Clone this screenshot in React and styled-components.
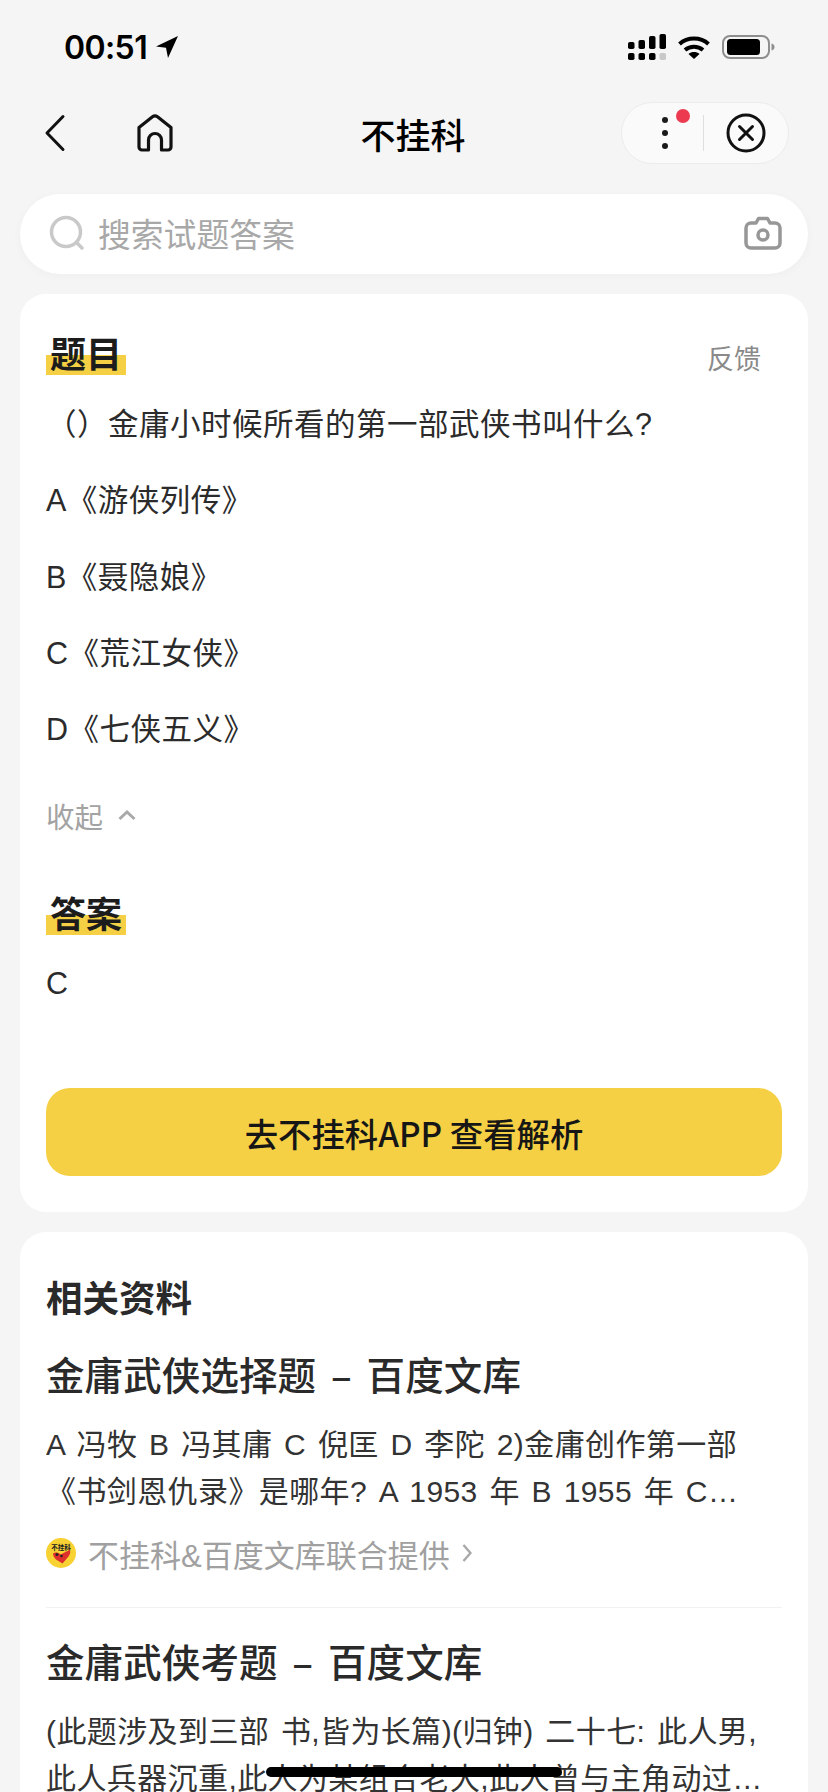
import React from "react"
import styled, { createGlobalStyle } from "styled-components"

const GlobalStyle = createGlobalStyle`
  html, body {
    margin: 0;
    padding: 0;
    background: #f5f5f5;
  }
  * {
    box-sizing: border-box;
  }
`

const Page = styled.div`
  position: relative;
  width: 828px;
  height: 1792px;
  overflow: hidden;
  background: #f5f5f5;
  color: #1c1c1c;
  font-family: "Liberation Sans", "Noto Sans CJK SC", sans-serif;
`

const StatusBar = styled.div`
  height: 94px;
  padding: 26px 53px 0 64px;
  display: flex;
  justify-content: space-between;
  align-items: flex-start;
`

const Clock = styled.div`
  display: flex;
  align-items: center;
  gap: 8px;
  height: 42px;
  font-family: Inter, sans-serif;
  font-size: 32px;
  font-weight: 600;
  letter-spacing: -0.6px;
  color: #000;
`

const StatusIcons = styled.div`
  display: flex;
  align-items: center;
  gap: 12px;
  height: 42px;
`

const NavBar = styled.div`
  height: 78px;
  padding: 0 39px 0 44px;
  display: flex;
  align-items: center;
  position: relative;
`

const NavIcons = styled.div`
  display: flex;
  align-items: center;
  gap: 70px;
  color: #111;
`

const NavTitle = styled.div`
  position: absolute;
  left: 0;
  right: 2px;
  text-align: center;
  font-family: "Noto Sans CJK SC", sans-serif;
  font-size: 35px;
  font-weight: 500;
  color: #000;
  pointer-events: none;
`

const Capsule = styled.div`
  margin-left: auto;
  width: 168px;
  height: 62px;
  border-radius: 31px;
  background: #fafafa;
  border: 1px solid #ececec;
  display: flex;
  align-items: center;
  position: relative;
`

const MenuSide = styled.div`
  width: 81px;
  padding-left: 5px;
  display: flex;
  align-items: center;
  justify-content: center;
`

const CloseSide = styled.div`
  flex: 1;
  display: flex;
  align-items: center;
  justify-content: center;
`

const CapsuleDivider = styled.div`
  width: 1px;
  height: 36px;
  background: #dedede;
`

const RedDot = styled.span`
  position: absolute;
  left: 54px;
  top: 6px;
  width: 14px;
  height: 14px;
  border-radius: 50%;
  background: #ec3b50;
`

const SearchBar = styled.div`
  margin: 22px 20px 0;
  height: 80px;
  border-radius: 40px;
  background: #fff;
  box-shadow: 0 2px 10px rgba(0, 0, 0, 0.03);
  padding: 0 26px 3px 29px;
  display: flex;
  align-items: center;
  gap: 13px;
  font-size: 32.800px;
  color: #a8a8a8;
`

const SearchText = styled.span`
  flex: 1;
`

const Card = styled.section`
  margin: 20px 20px 0;
  padding: 0 26px;
  background: #fff;
  border-radius: 26px;
`

const QuestionCard = styled(Card)`
  height: 918px;
  padding-top: 40px;
`

const RelatedCard = styled(Card)`
  min-height: 700px;
`

const HeadRow = styled.div`
  display: flex;
  justify-content: space-between;
  align-items: center;
`

const Marked = styled.h2`
  margin: ${props => props.$top || 0}px 0 0;
  padding: 0 6px 0 4px;
  width: 80px;
  height: 42px;
  display: block;
  font-size: 36px;
  line-height: 42px;
  font-weight: 700;
  white-space: nowrap;
  color: #1c1c1c;
  background: linear-gradient(#f6d044, #f6d044) left 0 top 20px / 100% 20px no-repeat;
`

const Feedback = styled.span`
  margin: 4px 21px 0 0;
  font-size: 27px;
  color: #8a8a8a;
`

const Line = styled.p`
  margin: ${props => props.$top || 0}px 0 0;
  height: 46px;
  font-size: 30.500px;
  line-height: 46px;
  letter-spacing: 0.5px;
  white-space: nowrap;
  color: #2b2b2b;
`

const Collapse = styled.div`
  margin-top: 43px;
  height: 40px;
  display: flex;
  align-items: center;
  gap: 15px;
  font-size: 28.500px;
  color: #a3a3a3;
`

const ViewButton = styled.div`
  margin-top: 82px;
  height: 88px;
  border-radius: 24px;
  background: #f6d044;
  display: flex;
  align-items: center;
  justify-content: center;
  font-family: "Noto Sans CJK SC", sans-serif;
  font-size: 33.400px;
  font-weight: 500;
  color: #161616;
`

const RelatedTitle = styled.h3`
  margin: 0;
  padding-top: 46px;
  height: 98px;
  font-size: 36.500px;
  line-height: 44px;
  font-weight: 600;
  color: #2a2a2a;
`

const ResultTitle = styled.h4`
  margin: ${props => props.$top}px 0 0;
  font-family: "Noto Sans CJK SC", sans-serif;
  font-size: 38.500px;
  line-height: 50px;
  font-weight: 500;
  letter-spacing: 0.1px;
  word-spacing: 6px;
  white-space: nowrap;
  color: #2a2a2a;
`

const ResultText = styled.p`
  margin: 22.500px 0 0;
  font-size: 30px;
  line-height: 47px;
  letter-spacing: 0.4px;
  word-spacing: 3px;
  color: #333;
  display: -webkit-box;
  -webkit-line-clamp: 2;
  -webkit-box-orient: vertical;
  overflow: hidden;
`

const Source = styled.div`
  margin-top: 17.500px;
  height: 42px;
  display: flex;
  align-items: center;
  gap: 12px;
  font-size: 31px;
  color: #a0a0a0;
`

const Rule = styled.hr`
  margin: 33px 0 0;
  border: 0;
  border-top: 1px solid #f1f1f1;
`

const HomeBar = styled.div`
  position: absolute;
  left: 266px;
  top: 1767px;
  width: 296px;
  height: 10px;
  border-radius: 5px;
  background: #000;
`

const LocationArrow = () => (
  <svg width="24" height="24" viewBox="0 0 24 24">
    <path d="M23 1 1 11.500l10 1.300L13 23z" fill="#000" />
  </svg>
)

const signalBars = [
  { x: 0, y: 8, h: 7 },
  { x: 10.500, y: 6, h: 9 },
  { x: 21, y: 2, h: 13 },
  { x: 31.500, y: 0, h: 15 },
]

const Signal = () => (
  <svg width="38" height="26" viewBox="0 0 38 26">
    {signalBars.map((bar, i) => (
      <g key={bar.x}>
        <rect x={bar.x} y={bar.y} width="6.500" height={bar.h} rx="1.800" fill="#000" />
        <rect x={bar.x} y="19" width="6.500" height="7" rx="1.800" fill={i === 3 ? "#c8c8c8" : "#000"} />
      </g>
    ))}
  </svg>
)

const Wifi = () => (
  <svg width="32" height="23" viewBox="0 0 32 23">
    <g fill="none" stroke="#000" strokeWidth="4">
      <path d="M1.500 8C9.500.8 22.500.8 30.500 8" />
      <path d="M7 14c5.200-4.400 12.800-4.400 18 0" />
    </g>
    <path d="M10.500 18c3.200-2.600 7.800-2.600 11 0L16 23z" fill="#000" />
  </svg>
)

const Battery = () => (
  <svg width="53" height="24" viewBox="0 0 53 24">
    <rect x="1" y="1" width="46" height="22" rx="7" fill="none" stroke="#8e8e8e" strokeWidth="2" />
    <rect x="5" y="4" width="33" height="16" rx="3.500" fill="#000" />
    <path d="M49.500 8.500c2 .5 3 1.800 3 3.500s-1 3-3 3.500z" fill="#8e8e8e" />
  </svg>
)

const Back = () => (
  <svg width="22" height="38" viewBox="0 0 22 38">
    <path d="M19 2.500 3 19l16 16.500" fill="none" stroke="#111" strokeWidth="3" strokeLinecap="round" strokeLinejoin="round" />
  </svg>
)

const Home = () => (
  <svg width="38" height="38" viewBox="0 0 38 38">
    <path
      d="M3 13.500 16.500 2.800a4 4 0 0 1 5 0L35 13.500V33a3 3 0 0 1-3 3h-6.500V26a6.500 6.500 0 0 0-13 0v10H6a3 3 0 0 1-3-3z"
      fill="none"
      stroke="#111"
      strokeWidth="3.200"
      strokeLinejoin="round"
    />
  </svg>
)

const Dots = () => (
  <svg width="8" height="34" viewBox="0 0 8 34">
    <g fill="#1a1a1a">
      <circle cx="4" cy="4" r="3" />
      <circle cx="4" cy="17" r="3" />
      <circle cx="4" cy="30" r="3" />
    </g>
  </svg>
)

const CloseCircle = () => (
  <svg width="40" height="40" viewBox="0 0 40 40">
    <circle cx="20" cy="20" r="18" fill="none" stroke="#111" strokeWidth="3" />
    <path d="M13.500 13.500l13 13m0-13-13 13" fill="none" stroke="#111" strokeWidth="3" strokeLinecap="round" />
  </svg>
)

const SearchIcon = () => (
  <svg width="36" height="36" viewBox="0 0 36 36">
    <circle cx="17" cy="17" r="14.500" fill="none" stroke="#c9c9c9" strokeWidth="3.500" />
    <path d="M28 28l5 5" fill="none" stroke="#c9c9c9" strokeWidth="3.500" strokeLinecap="round" />
  </svg>
)

const Camera = () => (
  <svg width="38" height="34" viewBox="0 0 38 34">
    <path
      d="M7 7h5l2.500-4.500h9L26 7h5a5 5 0 0 1 5 5v15a5 5 0 0 1-5 5H7a5 5 0 0 1-5-5V12a5 5 0 0 1 5-5z"
      fill="none"
      stroke="#979797"
      strokeWidth="3.500"
      strokeLinejoin="round"
    />
    <circle cx="19" cy="19" r="5" fill="none" stroke="#979797" strokeWidth="3.500" />
  </svg>
)

const ChevronUp = () => (
  <svg width="18" height="12" viewBox="0 0 18 12">
    <path d="M1.500 10 9 3l7.500 7" fill="none" stroke="#a9a9a9" strokeWidth="3" />
  </svg>
)

const ChevronRight = () => (
  <svg width="10" height="20" viewBox="0 0 10 20">
    <path d="M1.500 2 8.500 10l-7 8" fill="none" stroke="#a8a8a8" strokeWidth="2.400" />
  </svg>
)

const Logo = () => (
  <svg width="30" height="30" viewBox="0 0 30 30">
    <circle cx="15" cy="15" r="15" fill="#f8d132" />
    <text x="15" y="11.500" textAnchor="middle" fontSize="6.500" fontWeight="700" fill="#222" fontFamily="Noto Sans CJK SC">不挂科</text>
    <path d="M7 15.500c2-1.500 5-1.500 7.500 1l9-4.500c1.500 1.500 .5 4-1 6.500l-6 7-6.500-4c-2-2-3-4-3-6z" fill="#dd2f2c" />
    <circle cx="11" cy="16.500" r="1.500" fill="#222" />
    <circle cx="15.500" cy="18" r="1.300" fill="#222" />
  </svg>
)

const options = ["A《游侠列传》", "B《聂隐娘》", "C《荒江女侠》", "D《七侠五义》"]

const results = [
  {
    title: "金庸武侠选择题 – 百度文库",
    text: "A 冯牧 B 冯其庸 C 倪匡 D 李陀 2)金庸创作第一部《书剑恩仇录》是哪年? A 1953 年 B 1955 年 C 1956 年 D 1958 年 3)金庸小说",
    source: true,
  },
  {
    title: "金庸武侠考题 – 百度文库",
    text: "(此题涉及到三部 书,皆为长篇)(归钟) 二十七: 此人男,此人兵器沉重,此人为某组合老大,此人曾与主角动过手,此人最后死于非命",
  },
]

export default function App() {
  return (
    <Page>
      <GlobalStyle />
      <StatusBar>
        <Clock>00:51 <LocationArrow /></Clock>
        <StatusIcons>
          <Signal />
          <Wifi />
          <Battery />
        </StatusIcons>
      </StatusBar>
      <NavBar>
        <NavIcons>
          <Back />
          <Home />
        </NavIcons>
        <NavTitle>不挂科</NavTitle>
        <Capsule>
          <MenuSide><Dots /></MenuSide>
          <RedDot />
          <CapsuleDivider />
          <CloseSide><CloseCircle /></CloseSide>
        </Capsule>
      </NavBar>
      <SearchBar>
        <SearchIcon />
        <SearchText>搜索试题答案</SearchText>
        <Camera />
      </SearchBar>
      <QuestionCard>
        <HeadRow>
          <Marked>题目</Marked>
          <Feedback>反馈</Feedback>
        </HeadRow>
        <Line $top={24}>（）金庸小时候所看的第一部武侠书叫什么?</Line>
        {options.map(option => (
          <Line key={option} $top={30.300}>{option}</Line>
        ))}
        <Collapse>收起 <ChevronUp /></Collapse>
        <Marked $top={60}>答案</Marked>
        <Line $top={23}>C</Line>
        <ViewButton>去不挂科APP 查看解析</ViewButton>
      </QuestionCard>
      <RelatedCard>
        <RelatedTitle>相关资料</RelatedTitle>
        {results.map((result, i) => (
          <div key={result.title}>
            <ResultTitle $top={i === 0 ? 18 : 27}>{result.title}</ResultTitle>
            <ResultText>{result.text}</ResultText>
            {result.source && (
              <>
                <Source>
                  <Logo />
                  <span>不挂科&amp;百度文库联合提供</span>
                  <ChevronRight />
                </Source>
                <Rule />
              </>
            )}
          </div>
        ))}
      </RelatedCard>
      <HomeBar />
    </Page>
  )
}
